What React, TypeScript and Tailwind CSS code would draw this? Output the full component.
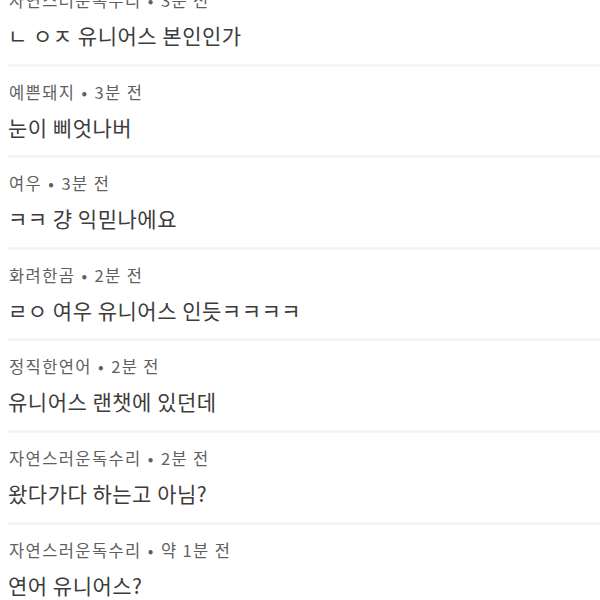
import React from "react";

const items = [
  { name: "자연스러운독수리", time: "3분 전", body: "ㄴ ㅇㅈ 유니어스 본인인가" },
  { name: "예쁜돼지", time: "3분 전", body: "눈이 삐엇나버" },
  { name: "여우", time: "3분 전", body: "ㅋㅋ 걍 익믿나에요" },
  { name: "화려한곰", time: "2분 전", body: "ㄹㅇ 여우 유니어스 인듯ㅋㅋㅋㅋ" },
  { name: "정직한연어", time: "2분 전", body: "유니어스 랜챗에 있던데" },
  { name: "자연스러운독수리", time: "2분 전", body: "왔다가다 하는고 아님?" },
  { name: "자연스러운독수리", time: "약 1분 전", body: "연어 유니어스?" },
];

export default function App() {
  return (
    <div
      className="w-[600px] h-[600px] overflow-hidden bg-white"
      style={{ fontFamily: '"Noto Sans CJK KR", "Noto Sans", sans-serif' }}
    >
      <div className="-mt-[25px] pl-2">
        {items.map((it, i) => (
          <div key={i} className="pt-[13px] pb-[14.6px] border-b-[3px] border-[#f5f5f5]">
            <div className="h-6 leading-6 text-[16.5px] text-[#5f5f5f] pl-px tracking-[1.4px]">
              {it.name} <span className="mx-[1px]">•</span> {it.time}
            </div>
            <div className="mt-[9px] h-7 leading-7 text-[21px] text-[#3c3c3c] tracking-[0.5px]">
              {it.body}
            </div>
          </div>
        ))}
      </div>
    </div>
  );
}
